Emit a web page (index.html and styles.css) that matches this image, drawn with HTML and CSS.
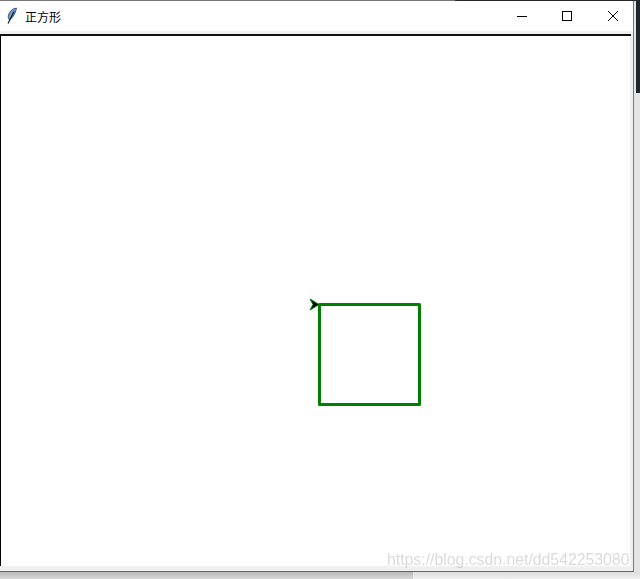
FILE: index.html
```html
<!DOCTYPE html>
<html lang="zh-CN">
<head>
  <meta charset="UTF-8">
  <title>正方形</title>
  <link rel="stylesheet" href="styles.css">
</head>
<body>
  <div class="screen">
    <div class="topEdge"></div>
    <div class="middle">
      <div class="window">

        <!-- TITLE BAR -->
        <div class="titlebar">
          <svg class="feather" width="12" height="18" viewBox="0 0 12 18">
            <path d="M10.500 1 C7 1.500 3.500 4 2.500 8 C2 10 2.300 11.500 3 12.500 C6 12 9 8 10.500 1 Z" fill="#6f9fd8" stroke="#2a3a58" stroke-width="0.8"/>
            <path d="M8 4.500 L2 16.500" fill="none" stroke="#111" stroke-width="1.1"/>
          </svg>
          <span class="title">正方形</span>
          <div class="controls">
            <svg class="ctrl" width="46" height="29" viewBox="0 0 46 29"><path d="M22 14.500 H32" stroke="#000" fill="none"/></svg>
            <svg class="ctrl" width="46" height="29" viewBox="0 0 46 29"><rect x="21.500" y="9.500" width="9" height="9" stroke="#000" fill="none"/></svg>
            <svg class="ctrl" width="46" height="29" viewBox="0 0 46 29"><path d="M21 9 L31 19 M31 9 L21 19" stroke="#000" fill="none"/></svg>
          </div>
        </div>

        <!-- CANVAS -->
        <div class="canvasWrap">
          <svg class="canvas" width="629" height="530" viewBox="0 0 629 530">
            <path d="M318.500 268.500 H418.500 V368.500 H318.500 Z" fill="none" stroke="#008000" stroke-width="3" stroke-linejoin="round"/>
            <path d="M318 268.500 L309 263 L312 268.500 L309 274 Z" fill="#000" stroke="#008000" stroke-width="1"/>
          </svg>
        </div>
      </div>
      <div class="sideStrip">
        <div class="sideDark"></div>
      </div>
    </div>
    <div class="bottomShadow">
      <div class="shadowLeft"></div>
    </div>
    <span class="watermark">https://blog.csdn.net/dd542253080</span>
  </div>
</body>
</html>
```

FILE: styles.css
```css
* { margin:0; padding:0; box-sizing:border-box; }
html, body { height:100%; overflow:hidden; background:#fff; }
body { font-family:"Noto Sans CJK SC","Liberation Sans",sans-serif; }

.screen {
  position:relative;
  width:640px; height:579px;
  display:flex; flex-direction:column;
}
.topEdge {
  height:1px; flex:none;
  background:linear-gradient(to right, #777 0, #777 455px, #22252c 455px);
}
.middle { display:flex; height:571px; flex:none; }

/* WINDOW */
.window {
  width:634px;
  display:flex; flex-direction:column;
  background:#f0f0f0;
  border-right:1px solid #777;
  border-bottom:1px solid #666;
}
.titlebar {
  height:30px; flex:none;
  background:#fff;
  display:flex; align-items:center;
  padding-left:6px;
}
.feather { flex:none; }
.title { margin-left:7px; font-size:12px; color:#000; }
.controls { margin-left:auto; display:flex; }
.ctrl { display:block; }

.canvasWrap {
  flex:1;
  margin-top:3px;
  border-top:2px solid #111;
  padding-bottom:5px;
  background:#f0f0f0;
  display:flex;
  margin-right:2px;
}
.canvas {
  display:block;
  box-sizing:content-box;
  background:#fff;
  border-left:1px solid #000;
}

/* WHAT IS BEHIND THE WINDOW */
.sideStrip {
  flex:1;
  background:#e4e4e4;
  display:flex; justify-content:flex-end;
}
.sideDark { width:4px; height:92px; background:#22252c; }
.bottomShadow { flex:1; background:linear-gradient(to bottom, #dcdcdc, #f0f0f0); }
.shadowLeft { width:413px; height:100%; background:linear-gradient(to bottom, #b8b8b8, #d8d8d8); }

.watermark {
  position:absolute;
  left:387px; top:551px;
  font-family:"Liberation Sans",sans-serif;
  font-size:15.800px;
  color:rgba(150,150,150,0.35);
  white-space:nowrap;
  filter:blur(0.4px);
}
```
